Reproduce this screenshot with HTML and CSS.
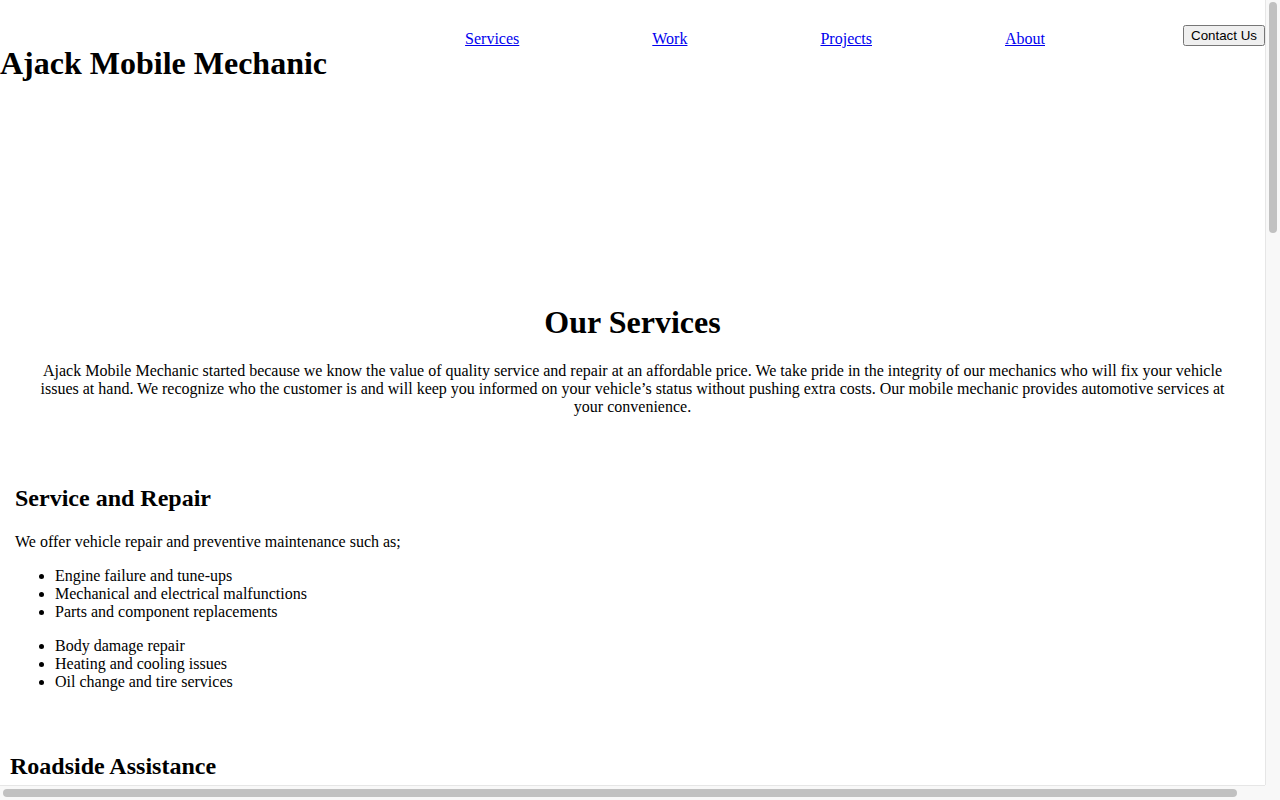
FILE: index.html
```html
<!DOCTYPE html>
<html lang="en">
<head>
<meta charset="utf-8">
<title>Ajack Mobile Mechanic</title>
<link rel="stylesheet" href="styles.css">
</head>
<body>
<div class="window">
  <div class="page">
    <header class="site-header">
      <h1 class="brand">Ajack Mobile Mechanic</h1>
      <nav class="main-nav">
        <ul class="nav-list">
          <li><a href="#services">Services</a></li>
          <li><a href="#work">Work</a></li>
          <li><a href="#projects">Projects</a></li>
          <li><a href="#about">About</a></li>
        </ul>
      </nav>
      <button class="contact-btn" type="button">Contact Us</button>
    </header>

    <div class="hero"></div>

    <section class="intro" id="services">
      <h1 class="intro-title">Our Services</h1>
      <p>Ajack Mobile Mechanic started because we know the value of quality service and repair at an affordable price. We take pride in the integrity of our mechanics who will fix your vehicle issues at hand. We recognize who the customer is and will keep you informed on your vehicle’s status without pushing extra costs. Our mobile mechanic provides automotive services at your convenience.</p>
    </section>

    <section class="service-block">
      <h2>Service and Repair</h2>
      <p>We offer vehicle repair and preventive maintenance such as;</p>
      <ul>
        <li>Engine failure and tune-ups</li>
        <li>Mechanical and electrical malfunctions</li>
        <li>Parts and component replacements</li>
      </ul>
      <ul>
        <li>Body damage repair</li>
        <li>Heating and cooling issues</li>
        <li>Oil change and tire services</li>
      </ul>
    </section>

    <section class="roadside-block">
      <h2>Roadside Assistance</h2>
    </section>
  </div>

  <div class="vscroll"><div class="vthumb"></div></div>
  <div class="hscroll"><div class="hthumb"></div></div>
  <div class="corner"></div>
</div>
</body>
</html>
```

FILE: styles.css
```css
html,
body {
  margin: 0;
  height: 100%;
  overflow: hidden;
  background: #ffffff;
}

body {
  font-family: "Liberation Serif", "Times New Roman", serif;
  font-size: 16px;
  color: #000000;
}

a {
  color: #0000ee;
}

/* Browser frame with scrollbars */
.window {
  display: grid;
  grid-template-columns: 1265px 15px;
  grid-template-rows: 785px 15px;
  width: 1280px;
  height: 800px;
}

.page {
  overflow: hidden;
  background: #ffffff;
}

.vscroll {
  border-left: 1px solid #e6e6e6;
  background: #f8f8f8;
  padding: 2px 3px 0 3px;
}

.vthumb {
  width: 8px;
  height: 231px;
  border-radius: 4px;
  background: #c1c1c1;
}

.hscroll {
  border-top: 1px solid #e6e6e6;
  background: #f8f8f8;
  padding: 3px 0 0 3px;
}

.hthumb {
  width: 1234px;
  height: 8px;
  border-radius: 4px;
  background: #c1c1c1;
}

.corner {
  background: #f8f8f8;
}

/* Header */
.site-header {
  display: flex;
  justify-content: space-between;
  align-items: flex-start;
}

.brand {
  font-size: 32px;
  margin: 45px 0 21.44px;
}

.nav-list {
  display: flex;
  gap: 133px;
  list-style: none;
  margin: 30px 0 0;
  padding: 0;
}

.contact-btn {
  margin-top: 25px;
  font-family: "Liberation Sans", Arial, sans-serif;
  font-size: 13.333px;
}

/* Hero placeholder */
.hero {
  height: 179px;
}

/* Intro */
.intro {
  padding: 0 40px 16px;
  text-align: center;
}

.intro-title {
  font-size: 32px;
  margin: 21.44px 0;
}

.intro p {
  margin: 16px 0;
}

/* Service blocks */
.service-block {
  width: 100%;
  padding: 17px 15px 15px;
}

.service-block h2 {
  margin: 19.92px 0 21px;
}

.roadside-block {
  padding: 11px 10px 10px;
}
```
